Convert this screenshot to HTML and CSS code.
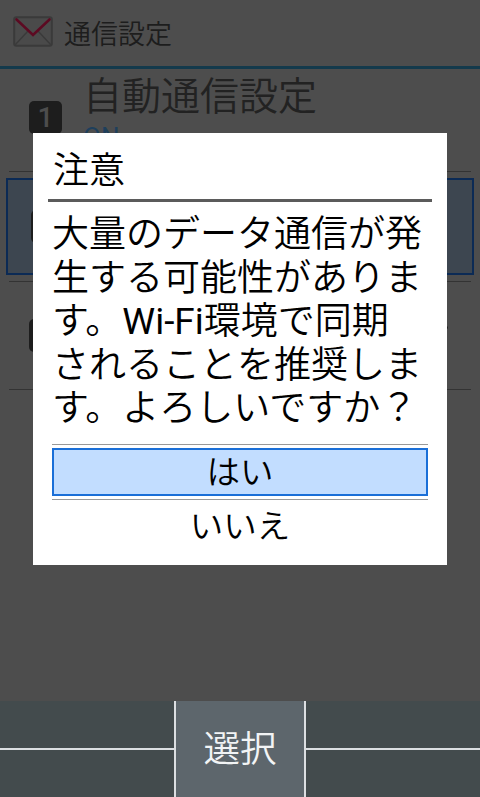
FILE: index.html
```html
<!DOCTYPE html>
<html lang="ja">
<head>
<meta charset="utf-8">
<title>通信設定</title>
<link rel="stylesheet" href="styles.css">
</head>
<body>
<div class="screen">
  <header class="app-header">
    <svg class="mail-icon" viewBox="0 0 40 32" width="40" height="32" aria-hidden="true">
      <rect x="1.2" y="1.2" width="37.6" height="28.6" rx="2" fill="#4a4a4a" stroke="#3a3a3a" stroke-width="2"/>
      <path d="M2 29 L15 15 M38 29 L25 15" fill="none" stroke="#3a3a3a" stroke-width="1.5"/>
      <path d="M3.5 3.5 L20 19 L36.5 3.5" fill="none" stroke="#5c0a22" stroke-width="2.6" stroke-linecap="round"/>
    </svg>
    <span class="app-title">通信設定</span>
  </header>
  <main class="list">
    <div class="row row-first">
      <span class="badge">1</span>
      <div class="row-text">
        <div class="row-title">自動通信設定</div>
        <div class="row-value">ON</div>
      </div>
    </div>
    <div class="row row-selected"><span class="badge">2</span></div>
    <div class="row row-third"><span class="badge">3</span><span class="stray-dot"></span></div>
  </main>
  <footer class="softkeys">
    <div class="softkey-side"></div>
    <div class="softkey-center">選択</div>
    <div class="softkey-side"></div>
  </footer>
</div>
<div class="dialog">
  <div class="dialog-title">注意</div>
  <p class="dialog-body">大量のデータ通信が発生する可能性があります。<span class="latin">Wi-Fi</span>環境で同期<br>されることを推奨します。よろしいですか？</p>
  <div class="dialog-actions">
    <div class="action action-selected">はい</div>
    <div class="action">いいえ</div>
  </div>
</div>
</body>
</html>
```
FILE: styles.css
```css
* { box-sizing: border-box; }
html, body { margin: 0; padding: 0; }
body {
  width: 480px;
  height: 797px;
  overflow: hidden;
  position: relative;
  background: #4d4d4d;
  font-family: Roboto, "Noto Sans CJK JP", "Noto Sans", sans-serif;
  font-weight: 350;
}
.screen { height: 797px; display: flex; flex-direction: column; }
.app-header {
  height: 69px;
  flex: none;
  display: flex;
  align-items: center;
  padding: 0 0 3px 13px;
  border-bottom: 3px solid #143a4c;
}
.mail-icon { flex: none; }
.app-title { margin-left: 11px; padding-top: 7px; font-size: 27px; line-height: 40px; color: #1d1d1d; }
.list { flex: 1; padding: 0 9px; }
.row { position: relative; display: flex; align-items: center; padding-left: 20px; }
.row-first { height: 103px; border-bottom: 1px solid #333; }
.row-first .badge { margin-bottom: 6px; }
.row-text { margin-left: 21px; align-self: flex-start; padding-top: 5px; }
.row-title { font-size: 39px; line-height: 46px; color: #222; white-space: nowrap; }
.row-value { font-size: 26px; line-height: 34px; color: #1e3f5c; font-weight: 400; }
.row-selected {
  height: 97px;
  margin: 6px -3px 6px;
  padding-left: 23px;
  background: #3d4650;
  border: 2px solid #0b2a55;
}
.row-third { height: 109px; border-top: 1px solid #333; border-bottom: 1px solid #333; }
.badge {
  flex: none;
  width: 33px;
  height: 33px;
  border-radius: 5px;
  background: #1d1d1d;
  color: #4d4d4d;
  font-size: 28px;
  font-weight: 500;
  line-height: 33px;
  text-align: center;
}
.stray-dot {
  position: absolute;
  right: 23px;
  top: 44px;
  width: 3px;
  height: 3px;
  border-radius: 50%;
  background: #222;
}
.softkeys {
  flex: none;
  height: 96px;
  display: flex;
  background: #434b4d;
}
.softkey-side { flex: 1; position: relative; }
.softkey-side::after {
  content: "";
  position: absolute;
  left: 0;
  right: 0;
  top: 47px;
  height: 2px;
  background: #dcdfe2;
}
.softkey-center {
  flex: none;
  width: 132px;
  background: #5d666c;
  border-left: 2px solid #dcdfe2;
  border-right: 2px solid #dcdfe2;
  color: #f2f4f5;
  font-size: 36.5px;
  line-height: 97px;
  text-align: center;
}
.dialog {
  position: absolute;
  left: 33px;
  top: 133px;
  width: 414px;
  height: 432px;
  background: #fff;
  padding: 0 15px;
  color: #000;
}
.dialog-title {
  height: 69px;
  padding-left: 5px;
  border-bottom: 3px solid #5b5b5b;
  font-size: 36px;
  line-height: 76px;
}
.dialog-body {
  margin: 11px 0 0;
  padding-left: 4px;
  font-size: 37px;
  line-height: 43.5px;
}
.latin { font-weight: 400; }
.dialog-actions { margin: 13px 4px 0; border-top: 1px solid #999; padding-top: 3px; }
.action {
  height: 52px;
  font-size: 33.5px;
  line-height: 53px;
  text-align: center;
}
.action-selected {
  height: 48px;
  line-height: 45px;
  background: #c2ddff;
  border: 2px solid #1a6fd8;
  margin-bottom: 3px;
}
.action-selected + .action { border-top: 1px solid #999; }
```
